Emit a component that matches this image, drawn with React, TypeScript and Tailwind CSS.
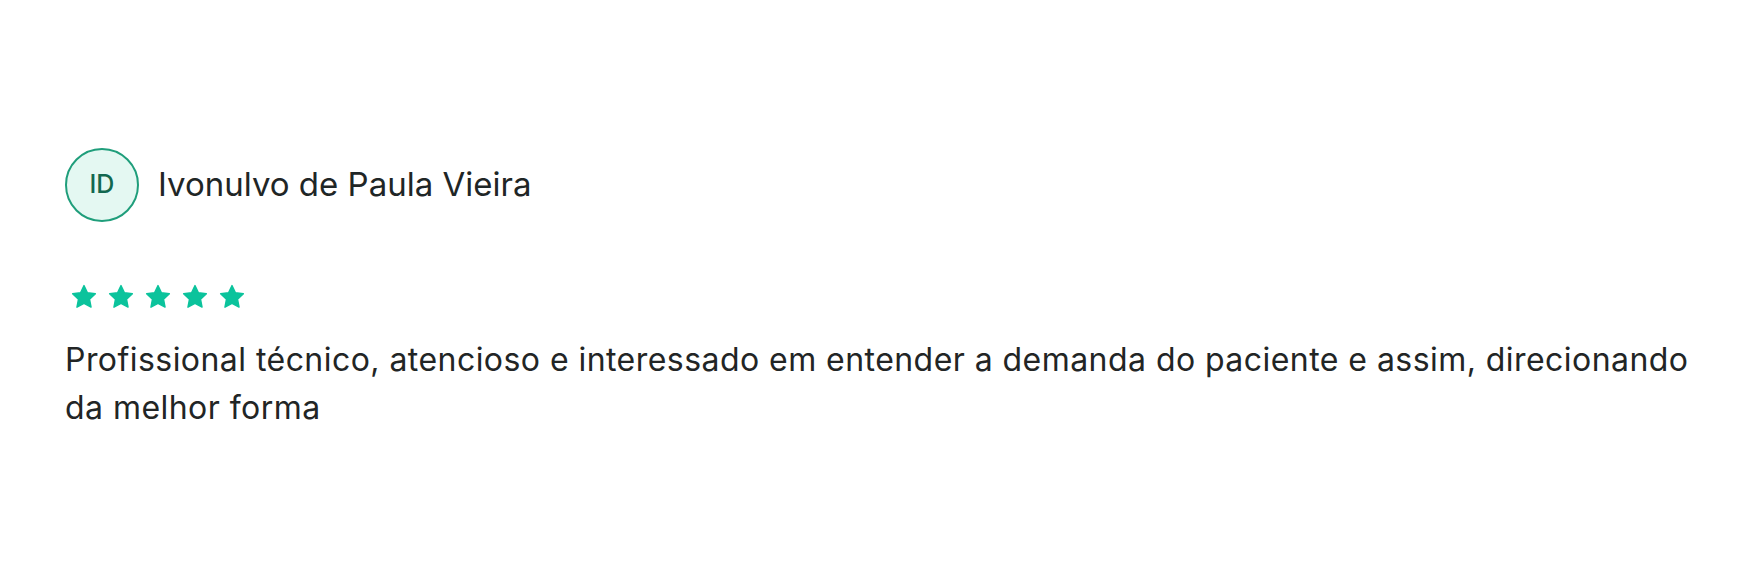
import React from 'react';

const Star = () => (
  <svg viewBox="0 0 24 24" className="w-[28px] h-[28px]" fill="#0bc39c">
    <path d="M12 2.2l2.95 6.2 6.8.85-4.98 4.7 1.27 6.75L12 17.4l-6.04 3.3 1.27-6.75-4.98-4.7 6.8-.85z" strokeLinejoin="round" stroke="#0bc39c" strokeWidth="1.2" />
  </svg>
);

const ReviewCard = () => {
  const review = {
    initials: 'ID',
    name: 'Ivonulvo de Paula Vieira',
    rating: 5,
    text: 'Profissional técnico, atencioso e interessado em entender a demanda do paciente e assim, direcionando da melhor forma',
  };
  return <div className="min-h-screen bg-white pt-[148px] pl-[65px] pr-[40px] font-['Inter',sans-serif]">
      <div className="flex items-center gap-[19px]">
        <div className="w-[74px] h-[74px] rounded-full border-2 border-[#1f9e7b] bg-[#e4f8f2] flex items-center justify-center text-[25px] font-medium text-[#12684f]">
          {review.initials}
        </div>
        <span className="text-[33px] text-[#1f2626]">{review.name}</span>
      </div>
      <div className="flex gap-[9px] mt-[61px] ml-[5px]">
        {Array.from({ length: review.rating }).map((_, i) => <Star key={i} />)}
      </div>
      <p className="mt-[25px] text-[32px] leading-[48px] tracking-[0.45px] text-[#222525] max-w-[1660px]">
        {review.text}
      </p>
    </div>;
};

export default function App() {
  return <ReviewCard />;
}
